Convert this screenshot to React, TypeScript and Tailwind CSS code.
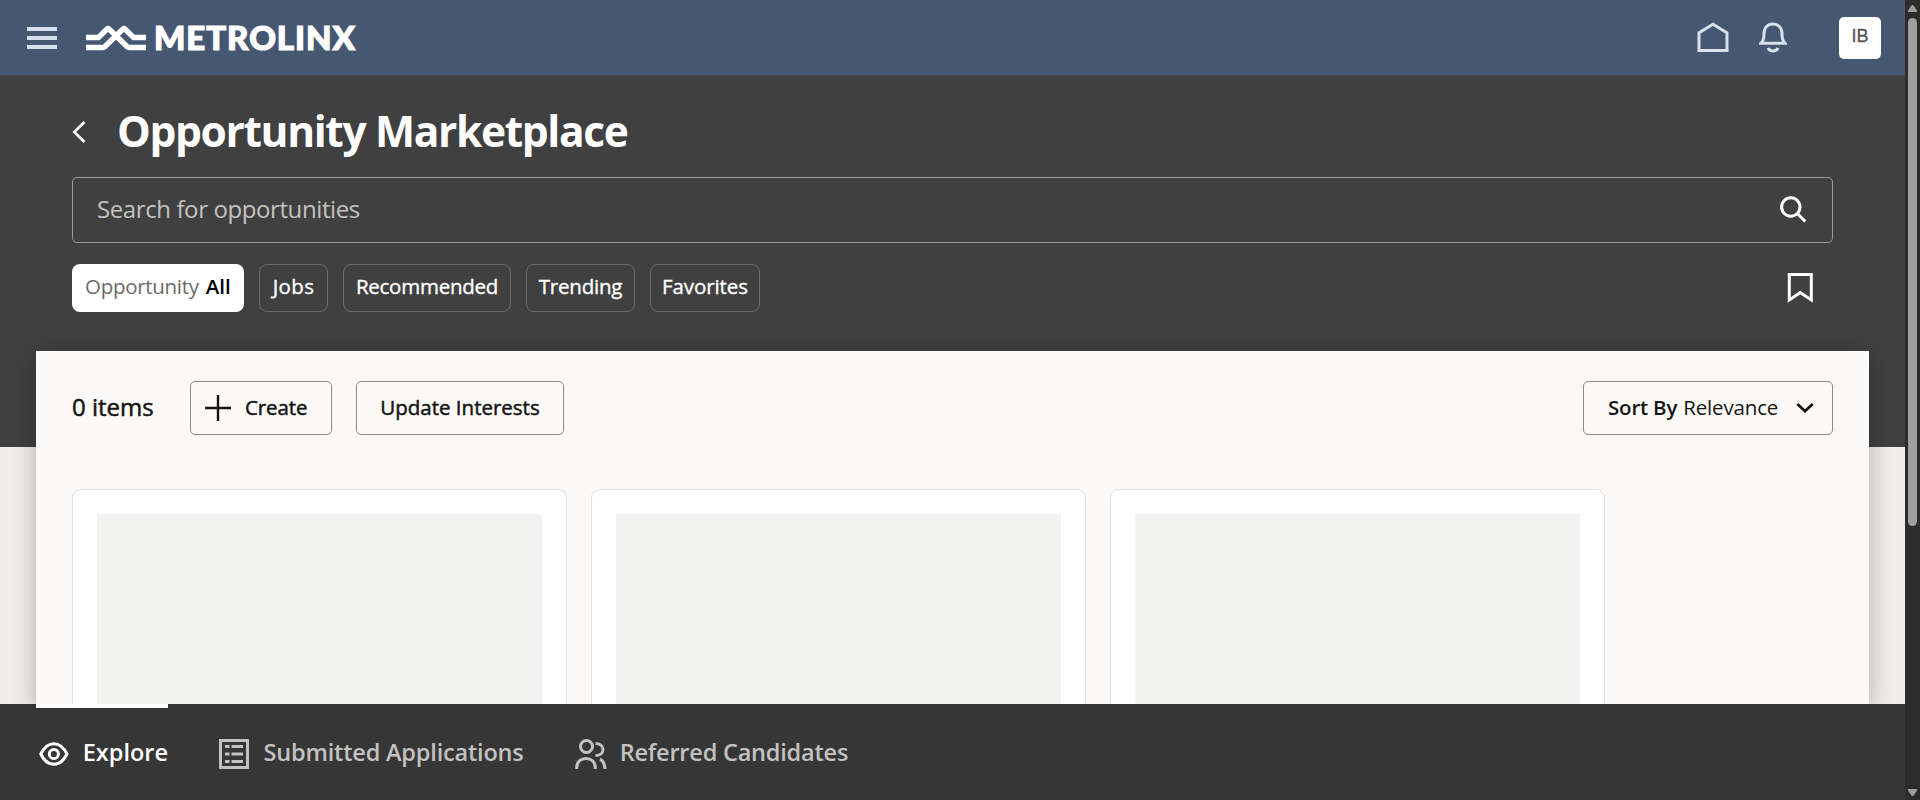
import type { ReactNode } from "react";

function T({ children, className = "" }: { children: ReactNode; className?: string }) {
  return <span className={"whitespace-nowrap " + className}>{children}</span>;
}

const chips = [
  { label: "Jobs", box: "w-[69px]", track: "tracking-[0.4px]" },
  { label: "Recommended", box: "w-[168px]", track: "tracking-[-0.25px]" },
  { label: "Trending", box: "w-[109px]", track: "tracking-[-0.2px]" },
  { label: "Favorites", box: "w-[110px]", track: "tracking-[-0.1px]" },
];

function Header() {
  return (
    <header className="flex h-[75px] shrink-0 items-center bg-[#465772] pl-[27px] pr-6">
      <svg width="30" height="22" viewBox="0 0 30 22" fill="#d5e0ea">
        <path d="M0 0h30v4H0zM0 9h30v4H0zM0 18h30v4H0z" />
      </svg>
      <div className="ml-[29px] flex items-center text-white">
        <svg width="60" height="26" viewBox="0 0 60 26" fill="none" stroke="#fff" strokeWidth="5.400">
          <path d="M0 12.500h12.500L21 4q1-1 2 0L41 21.500q1 1 2.500 1H60" />
          <path d="M0 22.500h16.500q1.500 0 2.500-1L37 4q1-1 2 0l8.500 8.500H60" />
        </svg>
        <T className="-mt-[2px] ml-[8px] font-['Lato'] text-[33px] leading-[36px] font-black tracking-[0.95px] [-webkit-text-stroke:1.200px]">METROLINX</T>
      </div>
      <div className="ml-auto flex items-center">
        <svg width="32" height="31" viewBox="0 0 32 31" fill="none" stroke="#d9e2ec" strokeWidth="3">
          <path d="M2 10.800L16 2.200l14 8.600v17.700H2z" />
        </svg>
        <svg className="ml-[30px]" width="28" height="31" viewBox="0 0 28 31" fill="none" stroke="#d9e2ec" strokeWidth="3">
          <path d="M2 21.300C4.500 19 5 16 5 12c0-6 3.500-10 9-10s9 4 9 10c0 4 .5 7 3 9.300z" />
          <path d="M9 26c1 2 3 3 5 3s4-1 5-3" />
        </svg>
        <div className="ml-[52px] flex size-[42px] items-center justify-center rounded-[5px] bg-white">
          <T className="-mt-1 font-['Liberation_Sans'] text-[18px] leading-[38px] text-[#555] [-webkit-text-stroke:0.3px]">IB</T>
        </div>
      </div>
    </header>
  );
}

function Hero() {
  return (
    <section className="h-[372px] shrink-0 bg-[#404040] px-[72px] pt-[27px] text-white">
      <div className="flex h-[60px] items-center">
        <svg width="14" height="22" viewBox="0 0 14 22" fill="none" stroke="#fff" strokeWidth="2.600">
          <path d="M12.500 1L2.200 11l10.300 10" />
        </svg>
        <h1 className="-mt-[3px] ml-[31px] text-[42.5px] leading-[60px] font-bold tracking-[-1.350px]">
          <T>Opportunity Marketplace</T>
        </h1>
      </div>
      <div className="mt-[15px] flex h-[66px] items-center justify-between rounded-[5px] border border-[#9c9b9a] pl-[24px] pr-[25px]">
        <T className="-mt-[2px] text-[24px] tracking-[-0.400px] text-[#c3c2c1]">Search for opportunities</T>
        <svg className="-mt-[2px]" width="27" height="27" viewBox="0 0 27 27" fill="none" stroke="#fff" strokeWidth="3">
          <circle cx="10.800" cy="11" r="9.200" />
          <path d="M17.300 17.500l8 8" />
        </svg>
      </div>
      <div className="mt-[21px] flex items-center gap-[15px] text-[20.5px]">
        <div className="flex h-[48px] w-[172px] items-center rounded-[8px] bg-white pb-[3px] pl-[13px] text-black">
          <T className="tracking-[-0.3px] text-[#6b6967]">Opportunity</T>
          <T className="ml-[7px] font-semibold">All</T>
        </div>
        {chips.map((c) => (
          <div key={c.label} className={`flex h-[48px] items-center justify-center rounded-[8px] border border-[#6f6e6d] pb-[3px] ${c.box}`}>
            <T className={`[-webkit-text-stroke:0.35px] ${c.track}`}>{c.label}</T>
          </div>
        ))}
        <svg className="ml-auto mr-[20px]" width="26" height="30" viewBox="0 0 26 30" fill="none" stroke="#fff" strokeWidth="3">
          <path d="M2.300 1.500h22v25.500l-11-7.500-11 7.500z" />
        </svg>
      </div>
    </section>
  );
}

function Panel() {
  const btn = "flex h-[54px] items-center rounded-[5px] border border-[#8b8a89]";
  return (
    <section className="relative mx-9 -mt-[96px] min-h-0 flex-1 bg-[#fbfaf8] px-9 pt-[30px] text-[#161513] shadow-[0_6px_24px_rgba(0,0,0,0.28)]">
      <div className="flex items-center text-[20.5px]">
        <div className="-mt-[2px] w-[118px]">
          <T className="text-[24px] [-webkit-text-stroke:0.5px]">0 items</T>
        </div>
        <div className={btn + " w-[142px] pl-[14px]"}>
          <svg width="26" height="26" viewBox="0 0 26 26" fill="none" stroke="#161513" strokeWidth="2.400">
            <path d="M13 0v26M0 13h26" />
          </svg>
          <T className="-mt-[2px] ml-[14px] tracking-[-0.1px] [-webkit-text-stroke:0.5px]">Create</T>
        </div>
        <div className={btn + " ml-6 w-[208px] justify-center"}>
          <T className="-mt-[2px] [-webkit-text-stroke:0.5px]">Update Interests</T>
        </div>
        <div className={btn + " ml-auto w-[250px] pl-[24px]"}>
          <T className="-mt-[2px] font-semibold tracking-[-0.2px]">Sort By</T>
          <T className="-mt-[2px] ml-[6px] tracking-[-0.150px]">Relevance</T>
          <svg className="ml-auto mr-[18px]" width="18" height="12" viewBox="0 0 18 12" fill="none" stroke="#161513" strokeWidth="2.800">
            <path d="M1.300 2L9 9l7.700-7" />
          </svg>
        </div>
      </div>
      <div className="mt-[54px] flex gap-6">
        {[0, 1, 2].map((i) => (
          <article key={i} className="h-[400px] w-[495px] rounded-[9px] border border-[#e3e2e0] bg-white p-6">
            <div className="h-[350px] bg-[#f2f2f0]" />
          </article>
        ))}
      </div>
    </section>
  );
}

function BottomBar() {
  const item = "flex h-full items-center";
  return (
    <nav className="relative flex h-24 shrink-0 items-center bg-[#363636] pl-9 text-[23.5px] font-semibold text-[#c3c2c1]">
      <div className={item + " relative w-[132px] pl-[3px] text-white"}>
        <span className="absolute left-0 top-0 h-1 w-full bg-white" />
        <svg className="mt-[4px]" width="30" height="24" viewBox="0 0 30 24" fill="none" stroke="#fff" strokeWidth="3">
          <path d="M1.800 12C5 5.500 9.500 1.600 15 1.600S25 5.500 28.200 12C25 18.500 20.500 22.400 15 22.400S5 18.500 1.800 12z" />
          <circle cx="15" cy="12" r="4.600" />
        </svg>
        <T className="ml-[14px] mt-[2px]">Explore</T>
      </div>
      <div className={item + " ml-[51px]"}>
        <svg className="mt-[4px]" width="30" height="30" viewBox="0 0 30 30" fill="#c3c2c1">
          <path fillRule="evenodd" d="M0 0h30v30H0zM3 3v24h24V3z" />
          <path d="M6 6h4.500v3H6zM12.500 6H24v3H12.500zM6 13.500h4.500v3H6zM12.500 13.500H24v3H12.500zM6 21h4.500v3H6zM12.500 21H24v3H12.500z" />
        </svg>
        <T className="ml-[14.5px] mt-[2px] tracking-[-0.180px]">Submitted Applications</T>
      </div>
      <div className={item + " ml-[51px]"}>
        <svg className="mt-[4px]" width="32" height="30" viewBox="0 0 32 30" fill="none" stroke="#c3c2c1" strokeWidth="3">
          <circle cx="11.500" cy="7.500" r="6" />
          <path d="M1.700 30v-1.500c0-5.500 4-9 9.300-9s9.300 3.500 9.300 9V30" />
          <path d="M20.500 4.500c4.500 0 7.500 2.200 7.500 6s-3 6-7.500 6M25 20c3 2 5 5 5 10" />
        </svg>
        <T className="ml-[13px] mt-[2px] tracking-[-0.200px]">Referred Candidates</T>
      </div>
    </nav>
  );
}

function Scrollbar() {
  return (
    <aside className="flex h-full w-[15px] flex-col items-center bg-[#2c2c2c] pt-[5px] pb-1">
      <svg width="9" height="7" viewBox="0 0 9 7" fill="#9f9f9f"><path d="M3.500.5q1-1 2 0L9 5.500V7H0V5.500z" /></svg>
      <div className="mt-[6px] h-[508px] w-[9px] rounded-full bg-[#9f9f9f]" />
      <svg className="mt-auto" width="9" height="7" viewBox="0 0 9 7" fill="#9f9f9f"><path d="M3.500 6.500q1 1 2 0L9 1.500V0H0v1.500z" /></svg>
    </aside>
  );
}

export default function App() {
  return (
    <div className="flex h-[800px] w-[1920px] overflow-hidden font-['Open_Sans',sans-serif]">
      <main className="flex h-full w-[1905px] flex-col overflow-hidden bg-[#efeeec]">
        <Header />
        <Hero />
        <Panel />
        <BottomBar />
      </main>
      <Scrollbar />
    </div>
  );
}
